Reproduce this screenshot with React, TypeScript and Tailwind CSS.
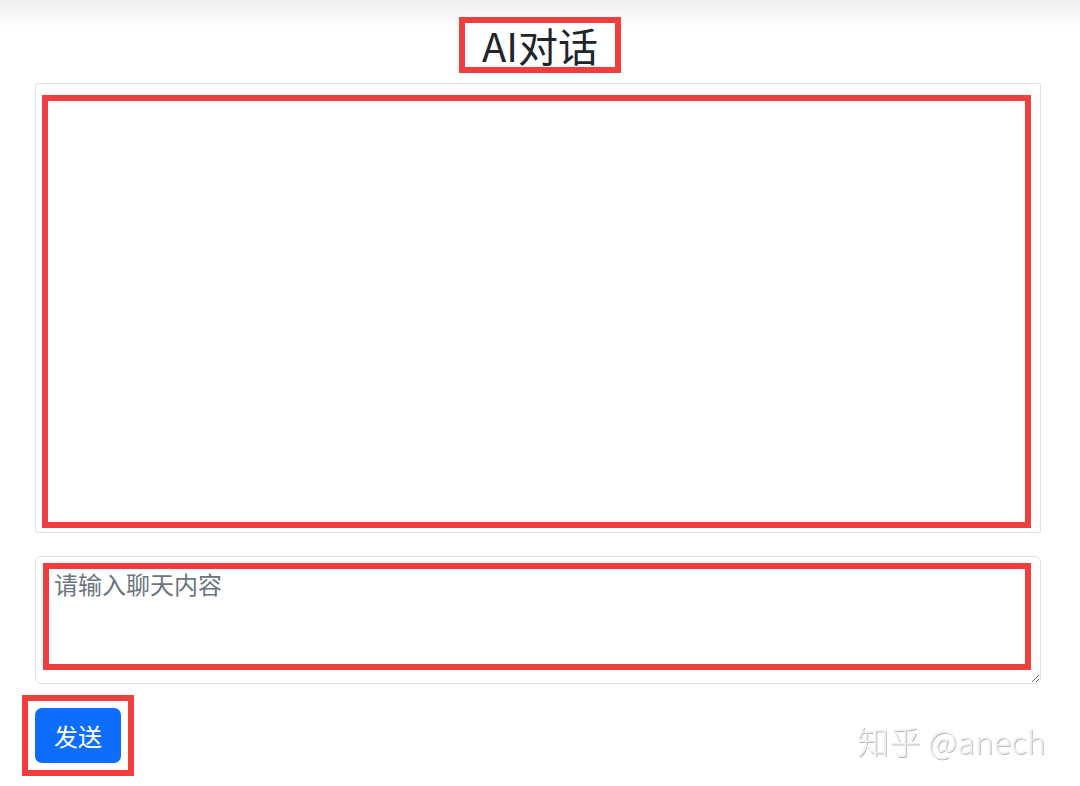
import { useState } from 'react';

const font = { fontFamily: '"Noto Sans CJK SC", "Noto Sans", sans-serif' };

export default function App() {
  const [text, setText] = useState('');

  return (
    <div
      className="relative min-h-[786px] w-[1080px] bg-[linear-gradient(to_bottom,#efefef_0px,#ffffff_28px)] text-[#212529]"
      style={font}
    >
      {/* title */}
      <div className="flex justify-center pt-[17px]">
        <div className="border-[6px] border-[#ef3e3e] px-[17px]">
          <h3 className="text-[40px] leading-[44px] font-normal">AI对话</h3>
        </div>
      </div>

      {/* chat history */}
      <div className="mt-[10px] ml-[35px] w-[1006px] rounded-[3px] border border-[#d9e3ea] pt-[11px] pb-[4px] pl-[6px] pr-[9px]">
        <div className="h-[433px] border-[6px] border-[#ef3e3e]" />
      </div>

      {/* input */}
      <div className="relative mt-[23px] ml-[35px] w-[1006px]">
        <textarea
          value={text}
          onChange={(e) => setText(e.target.value)}
          placeholder="请输入聊天内容"
          className="block h-[128px] w-full rounded-[6px] border border-[#dee2e6] bg-white px-[18px] py-[9px] text-[24px] leading-[36px] text-[#212529] outline-none placeholder:text-[#6c757d]"
        />
        <div className="pointer-events-none absolute top-[7px] left-[8px] right-[10px] bottom-[14px] border-[6px] border-[#ef3e3e]" />
      </div>

      {/* send */}
      <div className="mt-[11px] ml-[22px] inline-block border-[6px] border-[#ef3e3e] p-[7px]">
        <button className="flex h-[55px] items-center rounded-[7px] bg-[#0d6efd] px-[19px] text-[24px] text-white">
          发送
        </button>
      </div>

      {/* watermark */}
      <div className="absolute left-[857px] top-[718px] text-[32px] leading-[44px] font-light text-[#f0f0f0] [text-shadow:1px_1px_0_rgba(0,0,0,0.28)]">
        知乎 @anech
      </div>
    </div>
  );
}
